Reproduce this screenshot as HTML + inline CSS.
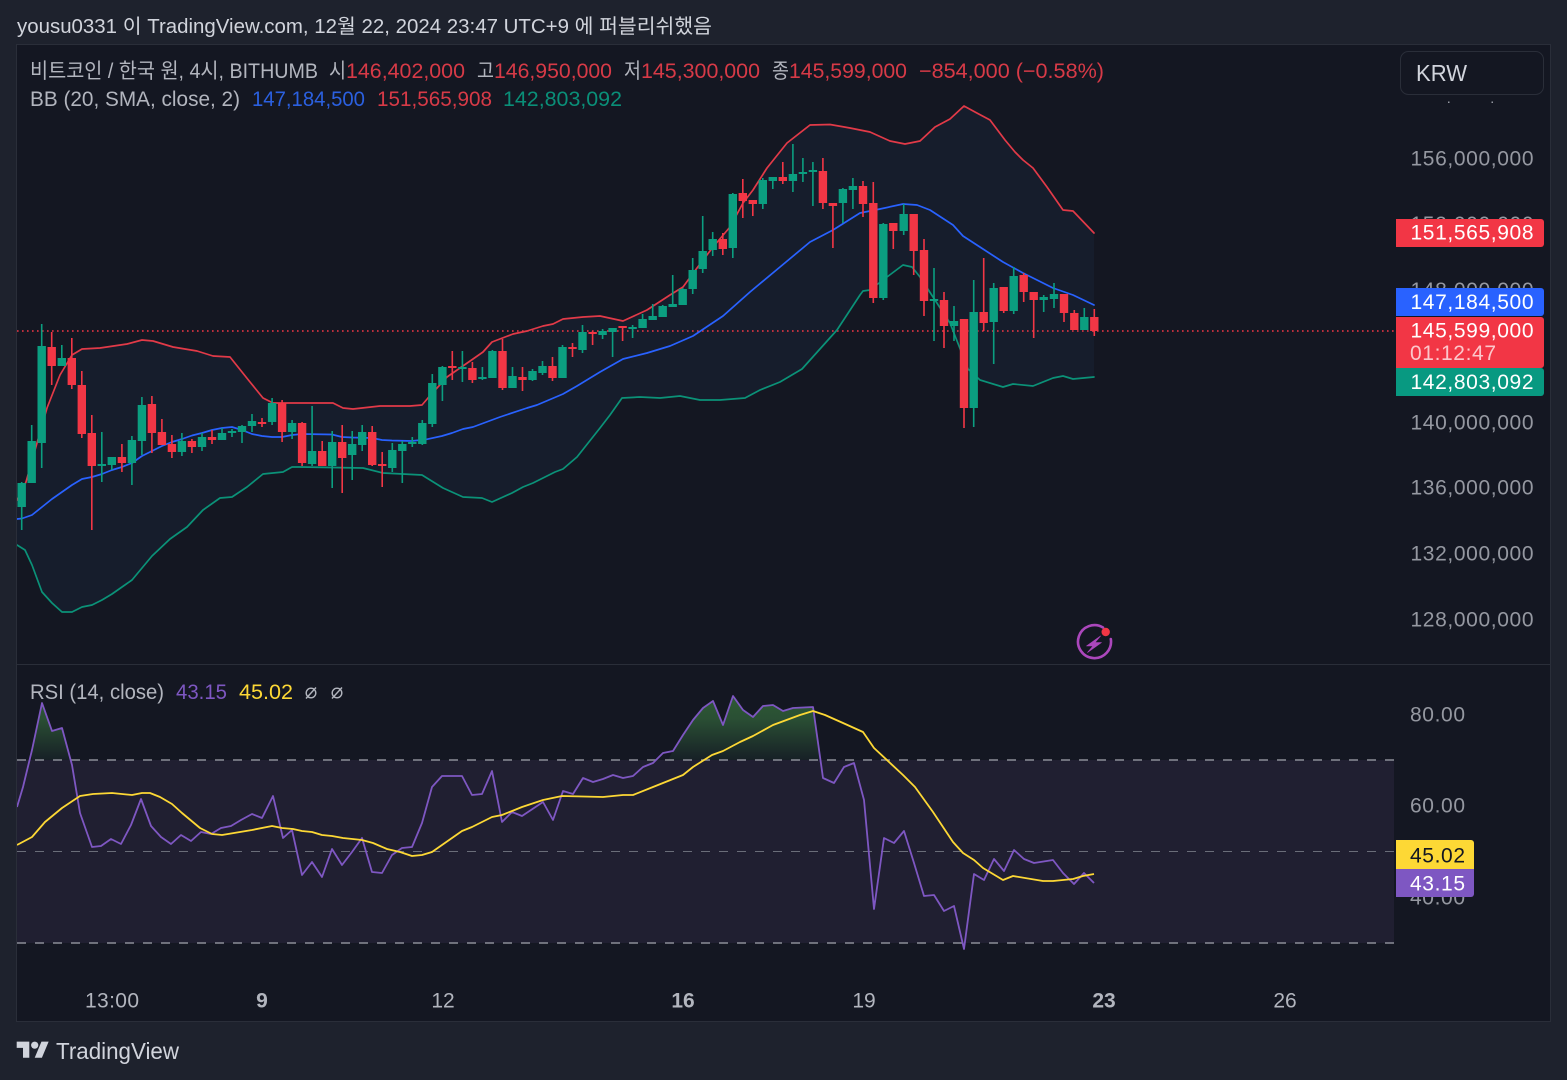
<!DOCTYPE html>
<html lang="ko">
<head>
<meta charset="utf-8">
<title>TradingView chart</title>
<style>
html,body{margin:0;padding:0;background:#1e222d;width:1567px;height:1080px;overflow:hidden}
svg{display:block}
text{font-family:"Liberation Sans","Noto Sans CJK KR",sans-serif}
</style>
</head>
<body>
<svg width="1567" height="1080" viewBox="0 0 1567 1080" xmlns="http://www.w3.org/2000/svg">
<defs>
<linearGradient id="ob" x1="0" y1="696" x2="0" y2="760" gradientUnits="userSpaceOnUse">
<stop offset="0" stop-color="#2d5a35"/><stop offset=".35" stop-color="#2a4f34"/><stop offset="1" stop-color="#172026"/>
</linearGradient>
<clipPath id="chart"><rect x="17" y="45" width="1533" height="976"/></clipPath>
</defs>
<rect width="1567" height="1080" fill="#1e222d"/>
<rect x="16.5" y="44.5" width="1534" height="977" fill="#141722" stroke="#2a2e39"/>
<line x1="17" y1="664.5" x2="1550" y2="664.5" stroke="#2a2e39"/>

<text x="17" y="33" font-size="20" fill="#d1d4dc" textLength="695" lengthAdjust="spacingAndGlyphs">yousu0331 이 TradingView.com, 12월 22, 2024 23:47 UTC+9 에 퍼블리쉬했음</text>

<g clip-path="url(#chart)">
<!-- BB fill -->
<path fill="#161d2c" d="M17 500L26 482L37 443L47 408L60 375L72 355L82 349L100 348L127 344L142 340L153 341L173 347L197 351L213 356L230 357L250 382L263 398L273 403L333 403L343 408L353 409L380 406L410 406L422 405L428 398L447 377L473 359L483 352L492 342L513 334L527 331L543 326L553 324L563 319L583 317L600 316L623 321L647 310L670 295L683 287L697 268L713 247L730 227L743 203L753 190L767 168L787 143L810 125L830 124.5L850 128L870 132L890 141L905 144L920 141L935 127L950 119L964 106L975 112L990 120L1005 140L1015 152L1023 160L1033 168L1047 187L1063 210L1073 211L1094 233V377L1073 379L1063 376L1053 378L1033 386L1013 384L1003 387L980 380L968 369L950 323L933 297L920 277L912 267L903 265L887 277L870 290L863 291L860 295L837 330L802 369L780 382L760 390L745 398L720 400L700 400L680 396L660 398L640 397L622 398L610 415L600 428L577 457L563 469L555 472L533 483L523 487L512 493L492 502L482 498L463 497L443 488L422 475L383 473L363 468L300 467L292 467L283 472L263 474L247 487L232 497L220 498L203 510L187 527L170 539L152 556L142 568L132 580L122 587L112 594L102 600L92 605L82 607L72 612L62 612L52 603L42 592L32 565L25 550L17 545Z"/>
<!-- price line -->
<line x1="17" y1="331" x2="1396" y2="331" stroke="#f23645" stroke-width="1.4" stroke-dasharray="1.6 3.4"/>
<!-- BB lines -->
<g fill="none" stroke-width="1.7" stroke-linejoin="round" stroke-linecap="round">
<path stroke="#0b9278" d="M17 545L25 550L32 565L42 592L52 603L62 612L72 612L82 607L92 605L102 600L112 594L122 587L132 580L142 568L152 556L170 539L187 527L203 510L220 498L232 497L247 487L263 474L283 472L292 467L300 467L363 468L383 473L422 475L443 488L463 497L482 498L492 502L512 493L523 487L533 483L555 472L563 469L577 457L600 428L610 415L622 398L640 397L660 398L680 396L700 400L720 400L745 398L760 390L780 382L802 369L837 330L860 295L863 291L870 290L887 277L903 265L912 267L920 277L933 297L950 323L968 369L980 380L1003 387L1013 384L1033 386L1053 378L1063 376L1073 379L1094 377"/>
<path stroke="#e23a48" d="M17 500L26 482L37 443L47 408L60 375L72 355L82 349L100 348L127 344L142 340L153 341L173 347L197 351L213 356L230 357L250 382L263 398L273 403L333 403L343 408L353 409L380 406L410 406L422 405L428 398L447 377L473 359L483 352L492 342L513 334L527 331L543 326L553 324L563 319L583 317L600 316L623 321L647 310L670 295L683 287L697 268L713 247L730 227L743 203L753 190L767 168L787 143L810 125L830 124.5L850 128L870 132L890 141L905 144L920 141L935 127L950 119L964 106L975 112L990 120L1005 140L1015 152L1023 160L1033 168L1047 187L1063 210L1073 211L1094 233"/>
<path stroke="#2962ff" d="M17 519L22 518.5L32 515L42 507L52 499L62 492L72 485L82 479L92 477L102 474L112 470L122 467L132 463L142 456L152 451L162 446L172 442L182 439L192 435.5L202 433L212 430L222 428L232 427L242 430L252 434L262 436L272 437L282 437L292 435L302 434L332 434.5L342 437L352 437.5L372 438L382 440L392 440.5L412 441L426.7 439.3L442 436L452 433L463 429L473 427L500 417L527 408L537 405L563 394L577 386L600 372L623 359L647 353L670 346L693 336L723 316L750 292L780 267L810 242L833 230L860 213L880 209L903 204L917 205L930 210L953 225L963 236L983 249L1003 262L1023 273L1053 288L1073 295L1094 305"/>
</g>
<!-- wicks -->
<path fill="none" stroke="#0b9e80" stroke-width="1.6" d="M21.7 482V530M31.7 425V483M41.7 324V468M61.8 345V366M101.8 432V482M111.8 457V470M131.9 436V485M141.9 397V455M181.9 433V456M202 433V451M222 428V440M232 429V437M242 425V443M252 414V432M272.1 398V425M292.1 420V439M312.1 406V466M332.2 431V488M352.2 431V480M362.2 425V451M392.3 443V472M402.3 441V483M412.3 437V447M422.3 420V445M432.3 374V427M442.4 366V401M462.4 351V382M482.4 367V380M492.4 350V378M512.5 367V388M532.5 369V381M542.5 361V375M562.5 345V378M582.5 325V353M602.6 329V339M612.6 328V357M632.6 325V338M642.6 314V328M652.7 304V320M662.7 305V317M672.7 275V307M682.7 288V305M692.7 258V294M702.7 216V273M712.7 232V256M732.8 193V258M762.8 178V209M772.8 177V189M792.9 144V192M802.9 158V182M812.9 162V206M842.9 188V223M852.9 178V209M883.3 223V300M903.7 204V235M934 268V341M954 306V341M973.7 280V427M993.7 283V364M1013.7 267V314M1043.7 295V312M1054 283V308M1084.3 308V330"/>
<path fill="none" stroke="#f23645" stroke-width="1.6" d="M51.7 332V385M71.8 338V389M81.8 371V438M91.8 415V530M121.9 444V472M151.9 396V453M161.9 419V445M171.9 435V458M191.9 439V453M212 430V444M262 418V427M282.1 400V442M302.1 422V466M322.2 441V466M342.2 425V493M372.2 426V466M382.2 452V487M452.3 351V380M472.4 362V383M502.5 339V390M522.5 367V391M552.5 357V381M572.5 343V357M592.6 331V345M622.6 326V341M722.8 233V255M742.8 179V218M752.8 200V216M782.8 162V184M822.9 158V209M832.9 203V248M863 181V217M873.3 182V303M893.3 223V249M913.7 214V275M924 239V316M944 292V348M964 319V428M983.7 258V331M1003.7 287V313M1023.7 273V302M1033.7 292V338M1064 294V322M1074.3 310V330M1094.3 309V336"/>
<!-- bodies -->
<path fill="none" stroke="#0b9e80" stroke-width="8.4" d="M21.7 483V507M31.7 441V483M41.7 346V443M61.8 358V366M101.8 464V466M111.8 457V465M131.9 440V463M141.9 405V441M181.9 441V452M202 437V447M222 433V440M232 431V433M242 426V432M252 421V426M272.1 403V422M292.1 423V432M312.1 451V464M332.2 442V466M352.2 444V455M362.2 432V445M392.3 450V468M402.3 444V451M412.3 442V444M422.3 423V444M432.3 383V424M442.4 367V385M462.4 367V369M482.4 377V379M492.4 351V378M512.5 376V388M532.5 371V380M542.5 366V373M562.5 347V378M582.5 332V350M602.6 331V335M612.6 328V332M632.6 327V329M642.6 319V328M652.7 316V320M662.7 306V317M672.7 304V307M682.7 289V305M692.7 270V289M702.7 251V269M712.7 239V250M732.8 194V248M762.8 180V204M772.8 177V181M792.9 174V181M802.9 172V174M812.9 170V172M842.9 189V203M852.9 186V190M883.3 224V298M903.7 214V231M934 299V301M954 321V326M973.7 312V408M993.7 288V322M1013.7 276V311M1043.7 297V300M1054 294V299M1084.3 317V330"/>
<path fill="none" stroke="#f23645" stroke-width="8.4" d="M51.7 347V366M71.8 358V385M81.8 385V434M91.8 433V466M121.9 457V463M151.9 404V433M161.9 432V445M171.9 444V452M191.9 441V447M212 437V440M262 422V424M282.1 403V432M302.1 423V463M322.2 451V466M342.2 442V458M372.2 432V465M382.2 464V466M452.3 366V368M472.4 368V380M502.5 351V388M522.5 377V380M552.5 366V378M572.5 347V349M592.6 332V334M622.6 326V328M722.8 239V249M742.8 193V201M752.8 200V204M782.8 177V181M822.9 171V203M832.9 203V206M863 186V204M873.3 203V298M893.3 223V231M913.7 214V251M924 250V301M944 300V326M964 319V408M983.7 312V323M1003.7 287V311M1023.7 275V292M1033.7 292V300M1064 294V313M1074.3 313V330M1094.3 317V331"/>
<!-- RSI -->
<rect x="17" y="760" width="1377" height="183" fill="#201f31"/>
<path fill="url(#ob)" d="M32 760L32 750L42 703L52 731L62 728L71 760Z"/>
<path fill="url(#ob)" d="M668 760L673 751L683 735L693 720L703 708L713 701L723 725L733 696L743 710L753 717L763 706L773 705L783 711L793 708L813 707L820 760Z"/>
<g fill="none" stroke-dasharray="9 9">
<line x1="17" y1="760" x2="1394" y2="760" stroke="#8b8d97" stroke-width="1.4"/>
<line x1="17" y1="851.5" x2="1394" y2="851.5" stroke="#787b86" stroke-width="1.1" stroke-opacity=".85"/>
<line x1="17" y1="943" x2="1394" y2="943" stroke="#8b8d97" stroke-width="1.4"/>
</g>
<path fill="none" stroke="#7e57c2" stroke-width="1.8" stroke-linejoin="round" d="M17 807L23 787L32 750L42 703L52 731L62 728L72 765L80 813L92 847L101 846L111 839L121 844L131 825L141 799L151 826L161 837L171 844L181 835L191 841L201 832L211 834L221 828L231 826L241 820L252 814L262 818L273 796L283 838L292 830L302 875L312 862L322 877L332 849L342 865L352 852L362 838L372 872L382 873L392 855L402 848L412 847L422 823L432 787L442 776L462 776L472 795L482 794L492 771L502 822L512 812L522 816L543 802L553 820L563 791L573 794L583 778L593 782L603 779L613 775L623 778L633 776L643 767L653 763L663 753L673 751L683 735L693 720L703 708L713 701L723 725L733 696L743 710L753 717L763 706L773 705L783 711L793 708L813 707L823 778L834 783L844 767L854 763L864 800L874 909L884 838L894 843L904 831L914 863L924 896L934 895L944 911L954 906L964 949L974 874L984 880L994 859L1004 871L1014 850L1024 859L1034 863L1053 860L1063 873L1074 884L1084 873L1094 883"/>
<path fill="none" stroke="#fdd835" stroke-width="1.8" stroke-linejoin="round" d="M17 845L32 837L45 822L62 808L80 796L93 794L112 793L132 795L142 793L150 793L160 797L172 804L182 813L200 828L212 834L222 835L252 830L272 826L282 828L293 829L302 831L312 832L322 835L332 836L343 838L362 840L373 843L387 849L400 852L412 856L422 855L432 852L462 831L472 827L492 817L502 815L522 807L543 800L562 796L603 797L623 795L633 795L653 787L683 775L693 767L712 755L723 751L740 742L753 736L773 725L800 715L813 711L825 715L843 723L863 732L874 748L903 775L915 787L933 812L953 842L963 853L974 860L983 868L1003 880L1013 876L1043 881L1053 881L1073 879L1083 876L1094 874"/>
</g>

<!-- legends -->
<g font-size="21">
<text x="30" y="78" fill="#b2b5be" textLength="288" lengthAdjust="spacingAndGlyphs">비트코인 / 한국 원, 4시, BITHUMB</text>
<text x="329" y="78" fill="#b2b5be" textLength="17" lengthAdjust="spacingAndGlyphs">시</text>
<text x="346" y="78" fill="#d73a47" textLength="119" lengthAdjust="spacingAndGlyphs">146,402,000</text>
<text x="477" y="78" fill="#b2b5be" textLength="17" lengthAdjust="spacingAndGlyphs">고</text>
<text x="494" y="78" fill="#d73a47" textLength="118" lengthAdjust="spacingAndGlyphs">146,950,000</text>
<text x="624" y="78" fill="#b2b5be" textLength="17" lengthAdjust="spacingAndGlyphs">저</text>
<text x="641" y="78" fill="#d73a47" textLength="119" lengthAdjust="spacingAndGlyphs">145,300,000</text>
<text x="772" y="78" fill="#b2b5be" textLength="17" lengthAdjust="spacingAndGlyphs">종</text>
<text x="789" y="78" fill="#d73a47" textLength="118" lengthAdjust="spacingAndGlyphs">145,599,000</text>
<text x="919" y="78" fill="#d73a47" textLength="185" lengthAdjust="spacingAndGlyphs">−854,000 (−0.58%)</text>
<text x="30" y="106" fill="#b2b5be" textLength="210" lengthAdjust="spacingAndGlyphs">BB (20, SMA, close, 2)</text>
<text x="252" y="106" fill="#2b60e0" textLength="113" lengthAdjust="spacingAndGlyphs">147,184,500</text>
<text x="377" y="106" fill="#d73a47" textLength="115" lengthAdjust="spacingAndGlyphs">151,565,908</text>
<text x="503" y="106" fill="#0a8f78" textLength="119" lengthAdjust="spacingAndGlyphs">142,803,092</text>
<text x="30" y="699" fill="#b2b5be" textLength="134" lengthAdjust="spacingAndGlyphs">RSI (14, close)</text>
<text x="176" y="699" fill="#7e57c2" textLength="51" lengthAdjust="spacingAndGlyphs">43.15</text>
<text x="239" y="699" fill="#fdd835" textLength="54" lengthAdjust="spacingAndGlyphs">45.02</text>
</g>
<g fill="none" stroke="#b2b5be" stroke-width="1.4">
<circle cx="311" cy="693" r="4.8"/><line x1="306" y1="698.5" x2="316" y2="687.5"/>
<circle cx="337" cy="693" r="4.8"/><line x1="332" y1="698.5" x2="342" y2="687.5"/>
</g>

<!-- KRW box -->
<rect x="1400.5" y="51.5" width="143" height="43" rx="8" fill="#141722" stroke="#2a2e39"/>
<text x="1416" y="81" font-size="23.5" fill="#d1d4dc" textLength="51" lengthAdjust="spacingAndGlyphs">KRW</text>
<rect x="1448" y="101.5" width="1.5" height="1.5" fill="#9598a1"/>
<rect x="1491.5" y="101.5" width="1.5" height="1.5" fill="#9598a1"/>

<!-- price axis -->
<g font-size="21" fill="#9598a1">
<text x="1410.5" y="165.5" textLength="123" lengthAdjust="spacing">156,000,000</text>
<text x="1410.5" y="231" textLength="123" lengthAdjust="spacing">152,000,000</text>
<text x="1410.5" y="297" textLength="123" lengthAdjust="spacing">148,000,000</text>
<text x="1410.5" y="429.5" textLength="123" lengthAdjust="spacing">140,000,000</text>
<text x="1410.5" y="494.5" textLength="123" lengthAdjust="spacing">136,000,000</text>
<text x="1410.5" y="560.5" textLength="123" lengthAdjust="spacing">132,000,000</text>
<text x="1410.5" y="626.5" textLength="123" lengthAdjust="spacing">128,000,000</text>
<text x="1410" y="721.5" textLength="55" lengthAdjust="spacing">80.00</text>
<text x="1410" y="812.5" textLength="55" lengthAdjust="spacing">60.00</text>
<text x="1410" y="904.5" textLength="55" lengthAdjust="spacing">40.00</text>
</g>

<!-- price labels -->
<path fill="#f23645" d="M1396 219H1541a3 3 0 0 1 3 3V244a3 3 0 0 1-3 3H1396Z"/>
<path fill="#2962ff" d="M1396 288H1541a3 3 0 0 1 3 3V313a3 3 0 0 1-3 3H1396Z"/>
<path fill="#f23645" d="M1396 317H1541a3 3 0 0 1 3 3V365a3 3 0 0 1-3 3H1396Z"/>
<path fill="#089981" d="M1396 368H1541a3 3 0 0 1 3 3V393a3 3 0 0 1-3 3H1396Z"/>
<g font-size="21" fill="#fff">
<text x="1410.5" y="239.5" textLength="123" lengthAdjust="spacing">151,565,908</text>
<text x="1410.5" y="309" textLength="123" lengthAdjust="spacing">147,184,500</text>
<text x="1410.5" y="337.5" textLength="123" lengthAdjust="spacing">145,599,000</text>
<text x="1410" y="360" fill-opacity=".72" textLength="86" lengthAdjust="spacing">01:12:47</text>
<text x="1410.5" y="389" textLength="123" lengthAdjust="spacing">142,803,092</text>
</g>
<path fill="#fdd835" d="M1396 840H1471a3 3 0 0 1 3 3V869H1396Z"/>
<path fill="#7e57c2" d="M1396 869H1474V894a3 3 0 0 1-3 3H1396Z"/>
<text x="1410" y="862.5" font-size="21" fill="#131722" textLength="55" lengthAdjust="spacing">45.02</text>
<text x="1410" y="890.5" font-size="21" fill="#fff" textLength="55" lengthAdjust="spacing">43.15</text>

<!-- time axis -->
<g font-size="21" fill="#b2b5be" text-anchor="middle">
<text x="112" y="1007.5" textLength="54" lengthAdjust="spacing">13:00</text>
<text x="262" y="1007.5" font-weight="700">9</text>
<text x="443" y="1007.5">12</text>
<text x="683" y="1007.5" font-weight="700">16</text>
<text x="864" y="1007.5">19</text>
<text x="1104" y="1007.5" font-weight="700">23</text>
<text x="1285" y="1007.5">26</text>
</g>

<!-- bolt icon -->
<path fill="none" stroke="#ab47bc" stroke-width="2.6" stroke-linecap="round" d="M1103 627.5A16.5 16.5 0 1 0 1110.8 639"/>
<path fill="#ab47bc" stroke="#ab47bc" stroke-width=".6" stroke-linejoin="round" d="M1100.5 636L1086.5 646H1093L1087.5 652.5L1101.5 642.5H1095Z"/>
<circle cx="1105.7" cy="632" r="4.2" fill="#f23645"/>

<!-- logo -->
<g fill="#d1d4dc" transform="translate(16.7 1038) scale(.9)">
<path d="M14 22H7V11H0V4h14v18zM28 22h-8l7.5-18h8L28 22z"/><circle cx="20" cy="8" r="4"/>
</g>
<text x="56" y="1059" font-size="23.5" fill="#d1d4dc" textLength="123" lengthAdjust="spacingAndGlyphs">TradingView</text>
</svg>
</body>
</html>
